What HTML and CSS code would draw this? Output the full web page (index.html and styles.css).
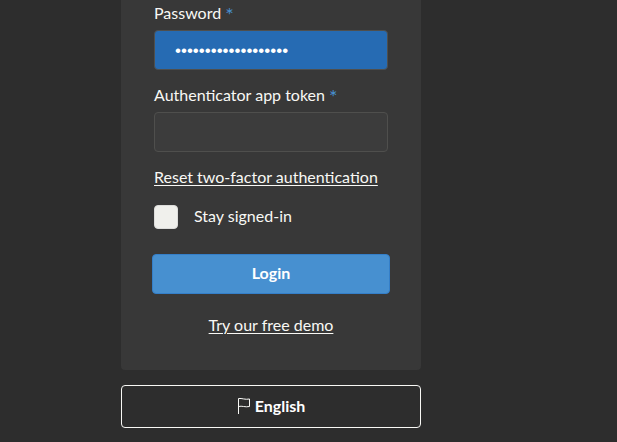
FILE: index.html
```html
<!DOCTYPE html>
<html lang="en">
<head>
    <meta charset="UTF-8">
    <meta name="viewport" content="width=device-width, initial-scale=1.0">
    <title>Login</title>
    <link rel="stylesheet" href="styles.css">
</head>
<body>

<main class="page">
    <form class="login-card">
        <label for="password">Password <span class="required">*</span></label>
        <input class="field filled" type="password" id="password" value="correcthorsebattery" required>

        <label for="token">Authenticator app token <span class="required">*</span></label>
        <input class="field" type="text" id="token" autocomplete="one-time-code" required>

        <a class="reset-link" href="#">Reset two-factor authentication</a>

        <div class="remember">
            <input type="checkbox" id="remember">
            <label for="remember">Stay signed-in</label>
        </div>

        <button class="login-button" type="submit">Login</button>
        <a class="demo-link" href="#">Try our free demo</a>
    </form>

    <button class="language-button" type="button">
        <svg class="flag" viewBox="0 0 14 18" aria-hidden="true">
            <path d="M1.5 17V1.5C5 1 8 3 12.5 2V9.5C8 10.500 5 8.500 1.500 9.500"/>
        </svg>
        English
    </button>
</main>

</body>
</html>
```

FILE: styles.css
```css
* {
    box-sizing: border-box;
}

body {
    margin: 0;
    padding: 0 75px 14px 0;
    background-color: #2d2d2d;
    color: #f8f8f5;
    font-family: Lato, sans-serif;
    font-size: 16px;
    line-height: 18px;
}

.page {
    max-width: 300px;
    margin: 0 auto;
}

.login-card {
    display: flex;
    flex-direction: column;
    padding: 4px 33px 36px;
    background-color: #383838;
    border-radius: 0 0 4px 4px;
}

.required {
    color: #4790d0;
    font-size: 20px;
    line-height: 1px;
    vertical-align: -3px;
}

.field {
    width: 100%;
    height: 40px;
    margin: 8px 0 16px;
    padding: 2px 20px 0;
    border: 1px solid #4f4f4d;
    border-radius: 4px;
    background-color: #3c3c3c;
    color: #ffffff;
    font: 17px "Liberation Sans", sans-serif;
}

.filled {
    background-color: #266bb3;
}

a {
    color: inherit;
    text-decoration: underline;
    text-underline-offset: 2px;
}

.reset-link {
    align-self: flex-start;
}

.remember {
    display: flex;
    align-items: center;
    gap: 16px;
    margin: 19px 0 25px;
}

.remember label {
    padding-bottom: 2px;
}

.remember input {
    appearance: none;
    width: 24px;
    height: 24px;
    margin: 0;
    border: 1px solid #dddddb;
    border-radius: 4px;
    background-color: #f0f0ec;
}

.login-button,
.language-button {
    padding: 0 0 2px;
    border-radius: 4px;
    color: #ffffff;
    font: bold 16px/18px Lato, sans-serif;
    cursor: pointer;
}

.login-button {
    height: 40px;
    margin: 0 -2px 22px;
    border: 1px solid #347fc9;
    background-color: #4790d0;
}

.demo-link {
    align-self: center;
}

.language-button {
    display: flex;
    align-items: center;
    justify-content: center;
    gap: 4px;
    width: 100%;
    height: 43px;
    margin-top: 15px;
    border: 1px solid #f8f8f5;
    background-color: transparent;
}

.flag {
    width: 14px;
    height: 18px;
    fill: none;
    stroke: #f8f8f5;
    stroke-width: 1;
}
```
